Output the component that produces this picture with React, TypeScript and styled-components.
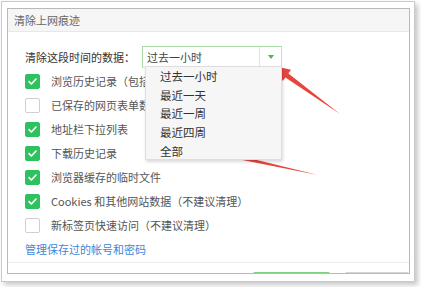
import React from 'react'
import styled, { createGlobalStyle } from 'styled-components'

const GlobalStyle = createGlobalStyle`
  html, body {
    margin: 0;
    padding: 0;
    background: #ffffff;
    font-family: "Microsoft YaHei", "Noto Sans CJK SC", "Noto Sans", sans-serif;
  }
`

const Page = styled.div`
  position: relative;
  width: 421px;
  height: 287px;
  overflow: hidden;
`

const Frame = styled.div`
  box-sizing: border-box;
  margin: 1px 0 0 1px;
  width: 414px;
  height: 281px;
  padding: 6px 4px 7px 5px;
  border: 1px solid #c9c9c9;
  background: #ffffff;
  box-shadow: 3px 3px 5px rgba(0, 0, 0, 0.22);
`

const Dialog = styled.div`
  box-sizing: border-box;
  width: 403px;
  height: 266px;
  border: 1px solid #b9b9b9;
  overflow: hidden;
  display: flex;
  flex-direction: column;
`

const Header = styled.div`
  height: 22px;
  flex-shrink: 0;
  display: flex;
  align-items: center;
  padding-left: 6px;
  background: #f6f6f6;
  border-bottom: 1px solid #e8e8e8;
  font-size: 11px;
  color: #666;
`

const Body = styled.div`
  padding: 14px 0 0 17px;
  flex-shrink: 0;
`

const RangeRow = styled.div`
  display: flex;
  align-items: center;
  height: 22px;
  margin-bottom: 1px;
`

const RangeLabel = styled.span`
  width: 117px;
  font-size: 11px;
  color: #333;
  white-space: nowrap;
`

const Select = styled.div`
  position: relative;
  box-sizing: border-box;
  width: 140px;
  height: 22px;
  display: flex;
  border: 1px solid #a6dba6;
  border-right-color: #d3d3d3;
  border-bottom-color: #cfe6cf;
`

const SelectValue = styled.div`
  flex: 1;
  display: flex;
  align-items: center;
  padding-left: 4px;
  font-size: 11px;
  color: #444;
`

const SelectButton = styled.div`
  width: 21px;
  display: flex;
  align-items: center;
  justify-content: center;
  border-left: 1px solid #e2e2e2;
`

const Caret = styled.span`
  width: 0;
  height: 0;
  border-left: 3px solid transparent;
  border-right: 3px solid transparent;
  border-top: 4px solid #4cb84c;
`

// open dropdown list, lies over the checkbox rows
const Menu = styled.div`
  position: absolute;
  left: 2px;
  top: 19px;
  box-sizing: border-box;
  width: 137px;
  height: 94px;
  background: #f6f6f6;
  border: 1px solid #dedede;
  box-shadow: 1px 2px 3px rgba(0, 0, 0, 0.15);
  z-index: 2;
`

const MenuItem = styled.div`
  height: 18.6px;
  display: flex;
  align-items: center;
  padding-left: 14px;
  font-size: 11.5px;
  color: #333;
`

const CheckRow = styled.div`
  height: 24px;
  display: flex;
  align-items: center;
  font-size: 11px;
  color: #555;
  white-space: nowrap;
`

const Box = styled.span<{ $checked: boolean }>`
  box-sizing: border-box;
  flex-shrink: 0;
  width: 15px;
  height: 15px;
  margin-right: 11px;
  border-radius: 2px;
  display: flex;
  align-items: center;
  justify-content: center;
  background: ${p => (p.$checked ? '#2fc160' : '#ffffff')};
  border: 1px solid ${p => (p.$checked ? '#2fc160' : '#cfcfcf')};
`

const LinkRow = styled.div`
  height: 24px;
  display: flex;
  align-items: center;
  font-size: 11px;
  color: #3f86d6;
`

const Footer = styled.div`
  margin-top: 1px;
  border-top: 1px solid #ececec;
  padding: 9px 0 0 245px;
  display: flex;
  gap: 15px;
`

const Button = styled.div<{ $primary?: boolean }>`
  box-sizing: border-box;
  width: ${p => (p.$primary ? '84px' : '70px')};
  height: 26px;
  border-radius: 2px;
  border: 1px solid ${p => (p.$primary ? '#7fd07f' : '#d5d5d5')};
  border-top-width: 2px;
  background: ${p => (p.$primary ? '#4cc262' : '#f4f4f4')};
`

const Overlay = styled.svg`
  position: absolute;
  left: 0;
  top: 0;
  pointer-events: none;
`

const Check = () => (
  <svg width="11" height="11" viewBox="0 0 11 11">
    <path d="M2 5.6 L4.4 8 L9 3" fill="none" stroke="#fff" strokeWidth="1.6" strokeLinecap="round" strokeLinejoin="round" />
  </svg>
)

const options = [
  { label: '浏览历史记录（包括在地址栏中输入的网址）', checked: true },
  { label: '已保存的网页表单数据', checked: false },
  { label: '地址栏下拉列表', checked: true },
  { label: '下载历史记录', checked: true },
  { label: '浏览器缓存的临时文件', checked: true },
  { label: 'Cookies 和其他网站数据（不建议清理）', checked: true },
  { label: '新标签页快速访问（不建议清理）', checked: false },
]

const ranges = ['过去一小时', '最近一天', '最近一周', '最近四周', '全部']

const App = () => {
  return (
    <Page>
      <GlobalStyle />
      <Frame>
        <Dialog>
          <Header>清除上网痕迹</Header>
          <Body>
            <RangeRow>
              <RangeLabel>清除这段时间的数据：</RangeLabel>
              <Select>
                <SelectValue>过去一小时</SelectValue>
                <SelectButton>
                  <Caret />
                </SelectButton>
                <Menu>
                  {ranges.map(r => (
                    <MenuItem key={r}>{r}</MenuItem>
                  ))}
                </Menu>
              </Select>
            </RangeRow>
            {options.map(o => (
              <CheckRow key={o.label}>
                <Box $checked={o.checked}>{o.checked && <Check />}</Box>
                {o.label}
              </CheckRow>
            ))}
            <LinkRow>管理保存过的帐号和密码</LinkRow>
          </Body>
          <Footer>
            <Button $primary />
            <Button />
          </Footer>
        </Dialog>
      </Frame>
      <Overlay width="421" height="287" viewBox="0 0 421 287">
        <polygon
          points="274,66 291,69.7 288.4,73.4 340,114 285.4,77.4 282.8,81.1"
          fill="#e8443e"
        />
        <polygon
          points="196,148 214.1,144.9 213.1,149.3 318,175 212.1,154.1 211.1,158.5"
          fill="#e8443e"
        />
      </Overlay>
    </Page>
  )
}

export default App
